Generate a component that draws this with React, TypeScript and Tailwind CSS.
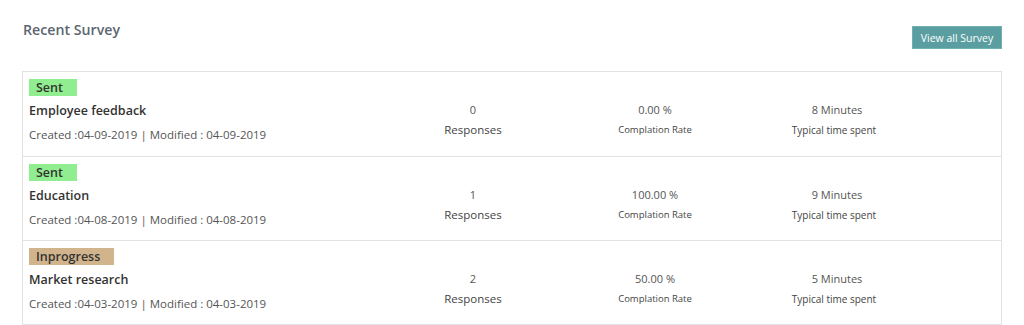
import React from 'react';

type Survey = {
  status: 'Sent' | 'Inprogress';
  title: string;
  created: string;
  modified: string;
  responses: number;
  rate: string;
  minutes: number;
};

const surveys: Survey[] = [
  { status: 'Sent', title: 'Employee feedback', created: '04-09-2019', modified: '04-09-2019', responses: 0, rate: '0.00 %', minutes: 8 },
  { status: 'Sent', title: 'Education', created: '04-08-2019', modified: '04-08-2019', responses: 1, rate: '100.00 %', minutes: 9 },
  { status: 'Inprogress', title: 'Market research', created: '04-03-2019', modified: '04-03-2019', responses: 2, rate: '50.00 %', minutes: 5 },
];

const Stat = ({ value, label, labelClass }: { value: string; label: string; labelClass: string }) => (
  <div className="w-[182px] flex flex-col items-center pt-[30px]">
    <span className="text-[11px] leading-[16px] text-[#555]">{value}</span>
    <span className={`mt-[4px] leading-[16px] text-[#444] ${labelClass}`}>{label}</span>
  </div>
);

const App: React.FC = () => {
  return (
    <div className="bg-white min-h-[325px] px-[22px] pt-[20px] font-['Open_Sans',sans-serif]">
      {/* Header */}
      <div className="flex justify-between items-start h-[51px]">
        <h2 className="ml-px text-[14.2px] leading-[20px] font-semibold text-[#5b6670]">Recent Survey</h2>
        <button className="mt-[6px] h-[23px] w-[90px] bg-[#5b9ea1] text-white text-[10.5px] leading-[23px] border border-[#6fb0b2]">
          View all Survey
        </button>
      </div>

      {/* Survey list */}
      <div className="border border-[#e2e2e2]">
        {surveys.map((s, i) => (
          <div key={i} className={`flex h-[84px] ${i > 0 ? 'border-t border-[#e2e2e2]' : ''}`}>
            <div className="w-[359px] pl-[6px] pt-[7px] flex flex-col items-start">
              <span
                className={`block h-[17px] leading-[17px] pl-[7px] pr-[14px] text-[12.5px] font-semibold text-[#333] ${
                  s.status === 'Sent' ? 'bg-[#90ee90]' : 'bg-[#d2b48c]'
                }`}
              >
                {s.status}
              </span>
              <div className="mt-[5px] text-[12.5px] leading-[20px] font-semibold text-[#333]">{s.title}</div>
              <div className="mt-[5px] text-[11.5px] leading-[18px] text-[#555]">
                Created :{s.created} | Modified : {s.modified}
              </div>
            </div>
            <Stat value={String(s.responses)} label="Responses" labelClass="text-[11.5px]" />
            <Stat value={s.rate} label="Complation Rate" labelClass="text-[9.5px]" />
            <Stat value={`${s.minutes} Minutes`} label="Typical time spent" labelClass="text-[10px] mr-[6px]" />
          </div>
        ))}
      </div>
    </div>
  );
};

export default App;
